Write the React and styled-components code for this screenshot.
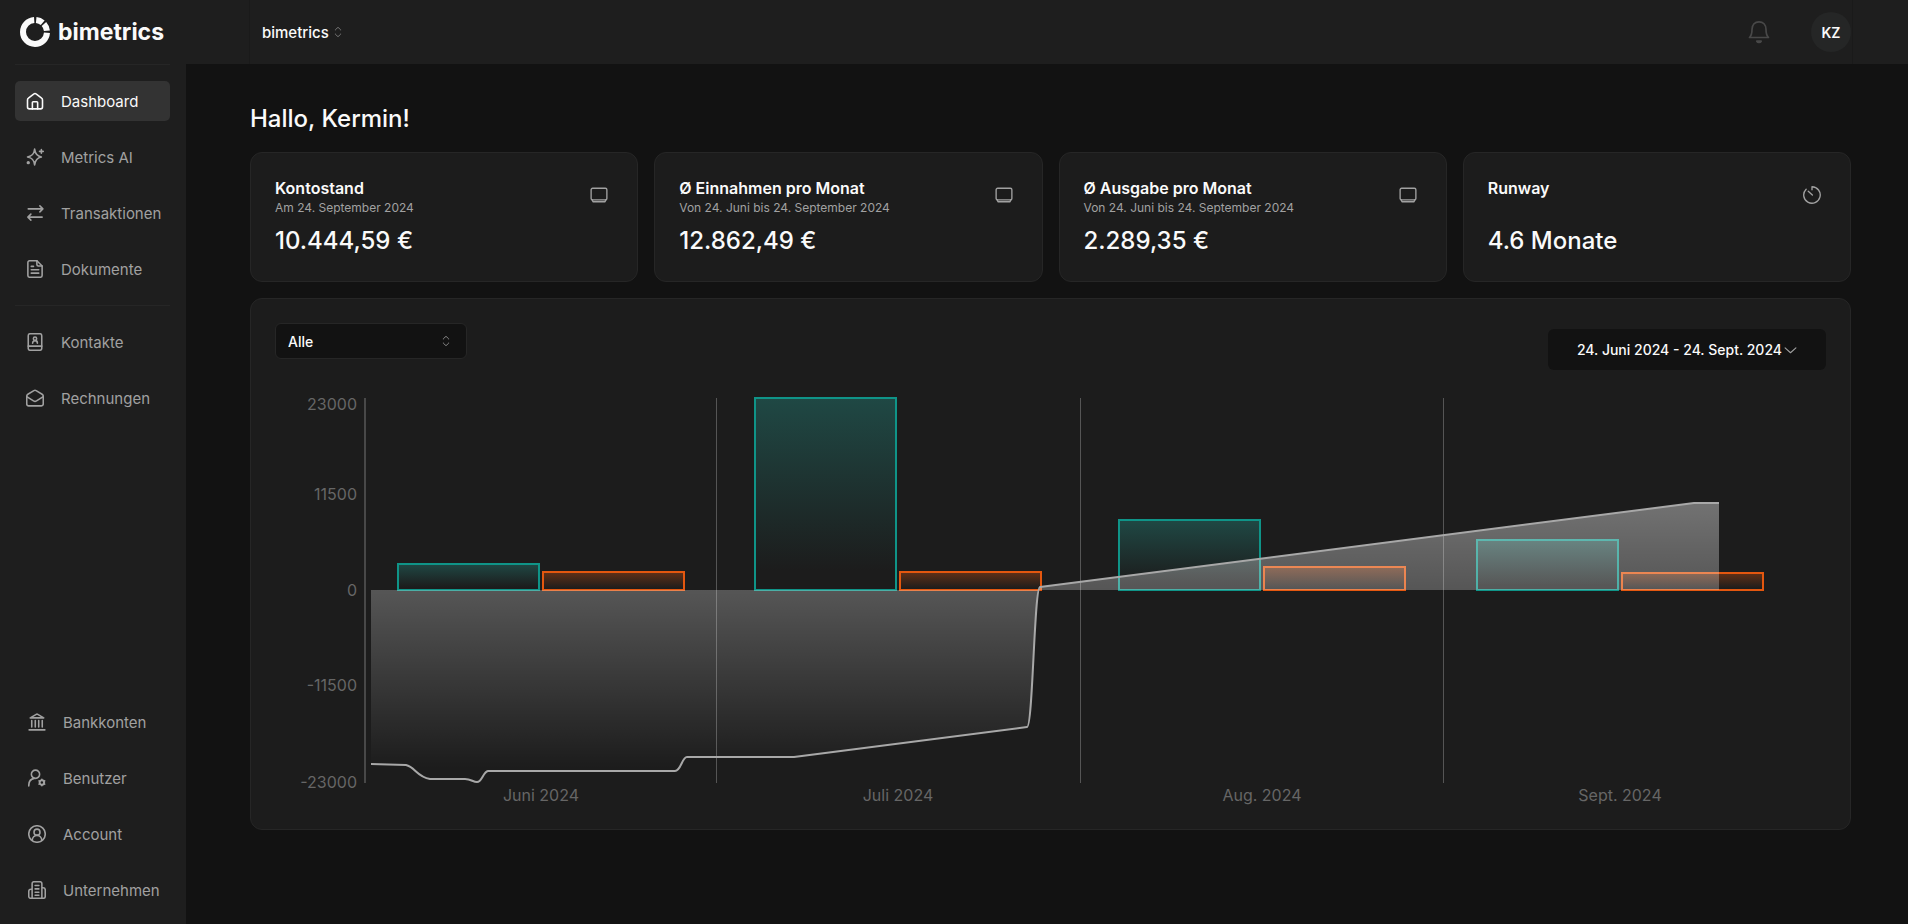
import React, { useState } from "react";
import styled, { createGlobalStyle } from "styled-components";

const GlobalStyle = createGlobalStyle`
  * {
    box-sizing: border-box;
  }

  body {
    margin: 0;
    background: #121212;
    color: #fafafa;
    font-family: Inter, "Open Sans", sans-serif;
    font-size: 14px;
  }

  button,
  select {
    font: inherit;
    color: inherit;
  }
`;

const Layout = styled.div`
  display: flex;
  min-height: 100vh;
`;

const Sidebar = styled.aside`
  position: sticky;
  top: 0;
  display: flex;
  flex-direction: column;
  flex: none;
  width: 186px;
  height: 100vh;
  padding: 0 16px 14px 15px;
  background: #1e1e1e;
`;

const Brand = styled.a`
  display: flex;
  align-items: center;
  gap: 8px;
  height: 64px;
  padding-left: 5px;
  color: #fafafa;
  font-size: 23px;
  font-weight: 700;
  text-decoration: none;
`;

const Nav = styled.nav`
  display: flex;
  flex-direction: column;
  gap: 16px;
  padding: 16px 0;
  border-top: 1px solid #262626;
`;

const BottomNav = styled(Nav)`
  margin-top: auto;
  padding: 0 0 0 2px;
  border-top: none;
`;

const NavLink = styled.a`
  display: flex;
  align-items: center;
  gap: 17px;
  height: 40px;
  padding-left: 11px;
  border-radius: 5px;
  background: ${({ $active }) => ($active ? "#333333" : "transparent")};
  color: ${({ $active }) => ($active ? "#fafafa" : "#a1a1a1")};
  font-size: 15px;
  text-decoration: none;
`;

const Main = styled.div`
  flex: 1;
  min-width: 0;
`;

const Header = styled.header`
  height: 64px;
  padding: 0 55px 0 63px;
  background: #1e1e1e;
`;

const HeaderInner = styled.div`
  display: flex;
  align-items: center;
  justify-content: space-between;
  height: 100%;
  padding: 0 1px 0 12px;
  border: solid #1a1a1a;
  border-width: 0 1px;
`;

const HeaderActions = styled.div`
  display: flex;
  align-items: center;
  gap: 41px;
`;

const PlainButton = styled.button`
  display: flex;
  align-items: center;
  gap: 2px;
  padding: 0;
  border: none;
  background: none;
  font-size: 15px;
  font-weight: 500;
  cursor: pointer;

  svg {
    color: #737373;
  }
`;

const BellButton = styled(PlainButton)`
  svg {
    color: #484848;
  }
`;

const Avatar = styled.button`
  width: 40px;
  height: 40px;
  padding: 0;
  border: none;
  border-radius: 50%;
  background: #252626;
  font-weight: 600;
  cursor: pointer;
`;

const Content = styled.main`
  padding: 37px 57px 64px 64px;
`;

const Greeting = styled.h1`
  margin: 0 0 15px;
  font-size: 24px;
  font-weight: 500;
  line-height: 36px;
`;

const Cards = styled.section`
  display: grid;
  grid-template-columns: repeat(4, 1fr);
  gap: 16px;
  margin-bottom: 16px;

  @media screen and (max-width: 1100px) {
    grid-template-columns: repeat(2, 1fr);
  }
`;

const Panel = styled.div`
  padding: 24px;
  border: 1px solid #262626;
  border-radius: 12px;
  background: #1c1c1c;
`;

const StatCard = styled(Panel)`
  display: flex;
  justify-content: space-between;
  padding-bottom: 22px;
`;

const StatTitle = styled.h2`
  margin: 0;
  font-size: 16px;
  font-weight: 600;
  line-height: 22px;
`;

const StatPeriod = styled.p`
  min-height: 18px;
  margin: 0 0 6px;
  color: #a1a1a1;
  font-size: 12px;
  line-height: 18px;
`;

const StatValue = styled.p`
  margin: 0;
  font-size: 24px;
  font-weight: 500;
  line-height: 36px;
`;

const StatIcon = styled.span`
  display: flex;
  align-items: center;
  justify-content: center;
  width: 28px;
  height: 28px;
  margin-top: 4px;
  color: #a1a1a1;
`;

const Toolbar = styled.div`
  display: flex;
  align-items: flex-start;
  justify-content: space-between;
  margin-bottom: 12px;
`;

const SelectWrapper = styled.div`
  position: relative;
  width: 192px;

  svg {
    position: absolute;
    top: 11px;
    right: 14px;
    color: #858585;
    pointer-events: none;
  }
`;

const Select = styled.select`
  display: block;
  width: 100%;
  height: 36px;
  padding: 0 12px;
  border: 1px solid #262626;
  border-radius: 6px;
  background: #121212;
  font-weight: 500;
  appearance: none;
`;

const DateButton = styled.button`
  display: flex;
  align-items: center;
  justify-content: center;
  gap: 2px;
  height: 41px;
  margin-top: 6px;
  padding: 0 29px;
  border: none;
  border-radius: 6px;
  background: #121212;
  font-weight: 500;
  cursor: pointer;
`;

const Chart = styled.svg`
  display: block;
  width: 100%;
  height: auto;

  text {
    fill: #666666;
    font-size: 16px;
  }
`;

const Icon = ({ size = 18, width = 2.1, children }) => (
  <svg
    width={size}
    height={size}
    viewBox="0 0 24 24"
    fill="none"
    stroke="currentColor"
    strokeWidth={width}
    strokeLinecap="round"
    strokeLinejoin="round"
    aria-hidden="true"
  >
    {children}
  </svg>
);

const Logo = () => (
  <svg width="30" height="30" viewBox="0 0 30 30" fill="none" aria-hidden="true">
    <circle
      cx="15"
      cy="15"
      r="12"
      stroke="currentColor"
      strokeWidth="6"
      pathLength="360"
      strokeDasharray="262 10 34 8 36 10"
      strokeDashoffset="-4"
    />
  </svg>
);

const HomeIcon = () => (
  <Icon>
    <path d="M2 10.600a3 3 0 0 1 1.200-2.400l7-5.500a3 3 0 0 1 3.600 0l7 5.500a3 3 0 0 1 1.200 2.400V20a2.500 2.500 0 0 1-2.500 2.500h-15A2.500 2.500 0 0 1 2 20z" />
    <path d="M8.500 22.500V14a1 1 0 0 1 1-1h5a1 1 0 0 1 1 1v8.500" />
  </Icon>
);

const SparklesIcon = () => (
  <Icon>
    <path d="M11.500 1.500c.8 6.500 3 9.300 9 10.500-6 1.200-8.200 4-9 10.500-.8-6.500-3-9.300-9.500-10.500 6.500-1.200 8.700-4 9.500-10.500z" />
    <path d="M20.500 2v5M18 4.500h5" />
    <circle cx="3" cy="19.500" r="1.200" fill="currentColor" />
  </Icon>
);

const TransferIcon = () => (
  <Icon>
    <path d="M3 6.500h19M18.500 2.500l4 4-4 4M21.500 17.500H2.500M6.500 13.500l-4 4 4 4" />
  </Icon>
);

const DocumentIcon = () => (
  <Icon>
    <path d="M14.500 1H5a2.500 2.500 0 0 0-2.500 2.500v17A2.500 2.500 0 0 0 5 23h14a2.500 2.500 0 0 0 2.500-2.500V8z" />
    <path d="M14.500 1v5a2 2 0 0 0 2 2h5M7 8.500h3M7 13h10M7 17.500h10" />
  </Icon>
);

const ContactsIcon = () => (
  <Icon>
    <rect x="3" y="1" width="18" height="22" rx="2.500" />
    <path d="M3 17.500h18M8.800 13.500c0-4.500 6.400-4.500 6.400 0" />
    <circle cx="12" cy="7.500" r="2.200" />
  </Icon>
);

const InvoiceIcon = () => (
  <Icon>
    <path d="M1 9.600a3 3 0 0 1 1.500-2.600l8-4.800a3 3 0 0 1 3 0l8 4.800A3 3 0 0 1 23 9.600V20a2.500 2.500 0 0 1-2.500 2.500h-17A2.500 2.500 0 0 1 1 20z" />
    <path d="M1.500 10.500l8.500 5.400a4 4 0 0 0 4 0l8.500-5.400" />
  </Icon>
);

const BankIcon = () => (
  <Icon>
    <path d="M3 6.500l8-4.700a2 2 0 0 1 2 0l8 4.700zM5 10v8.500M9.700 10v8.500M14.300 10v8.500M19 10v8.500M1.500 22.500h21" />
  </Icon>
);

const UserCogIcon = () => (
  <Icon>
    <circle cx="10" cy="7" r="5.500" />
    <path d="M1 22.500c0-5.500 3-9.500 7.500-10" />
    <circle cx="18.500" cy="18" r="3" strokeWidth="2.600" />
    <path d="M18.500 13.600v1M18.500 21.400v1M14.700 15.800l.9.500M21.400 19.700l.9.500M14.700 20.200l.9-.5M21.400 16.300l.9-.5" />
  </Icon>
);

const AccountIcon = () => (
  <Icon>
    <circle cx="12" cy="12" r="11" />
    <circle cx="12" cy="9.500" r="4" />
    <path d="M5.500 20.500c.5-4 3-6.500 6.500-6.500s6 2.500 6.500 6.500" />
  </Icon>
);

const CompanyIcon = () => (
  <Icon>
    <path d="M5.500 23V3.500A2.500 2.500 0 0 1 8 1h8a2.500 2.500 0 0 1 2.500 2.500V23M5.500 11H4a3 3 0 0 0-3 3v6.500A2.500 2.500 0 0 0 3.500 23h17a2.500 2.500 0 0 0 2.500-2.500V12a3 3 0 0 0-3-3h-1.500" />
    <path d="M9.500 6h5M9.500 10.500h5M9.500 15h5M9.500 19h5" />
  </Icon>
);

const BellIcon = () => (
  <svg
    width="22"
    height="24"
    viewBox="0 0 22 24"
    fill="none"
    stroke="currentColor"
    strokeWidth="1.700"
    strokeLinecap="round"
    strokeLinejoin="round"
    aria-hidden="true"
  >
    <path d="M1.500 17.500c2-2 2.500-4 2.500-8C4 4.500 7 1.800 11 1.800s7 2.700 7 7.700c0 4 .5 6 2.500 8z" />
    <path d="M8.800 21.200c.9 1.500 3.500 1.500 4.400 0z" />
  </svg>
);

const SelectorIcon = () => (
  <Icon size={14} width={1.700}>
    <path d="M7.500 8.500V8L12 4l4.500 4v.5M7.500 15.500v.5l4.500 4 4.500-4v-.5" />
  </Icon>
);

const ChevronIcon = () => (
  <Icon size={13} width={2}>
    <path d="M2 9l10 9 10-9" stroke="#a1a1a1" />
  </Icon>
);

const CardIcon = () => (
  <Icon width={1.800}>
    <rect x="1.500" y="3" width="21" height="15.500" rx="2" />
    <path d="M3 18.500l1 2.500h16l1-2.500" />
  </Icon>
);

const RunwayIcon = () => (
  <Icon width={1.800}>
    <path d="M12 5V1a11 11 0 1 1-7.800 3.200M7 7l5.500 5" />
  </Icon>
);

const mainLinks = [
  { label: "Dashboard", icon: <HomeIcon />, active: true },
  { label: "Metrics AI", icon: <SparklesIcon /> },
  { label: "Transaktionen", icon: <TransferIcon /> },
  { label: "Dokumente", icon: <DocumentIcon /> },
];

const officeLinks = [
  { label: "Kontakte", icon: <ContactsIcon /> },
  { label: "Rechnungen", icon: <InvoiceIcon /> },
];

const settingsLinks = [
  { label: "Bankkonten", icon: <BankIcon /> },
  { label: "Benutzer", icon: <UserCogIcon /> },
  { label: "Account", icon: <AccountIcon /> },
  { label: "Unternehmen", icon: <CompanyIcon /> },
];

const stats = [
  {
    title: "Kontostand",
    period: "Am 24. September 2024",
    value: "10.444,59 €",
    icon: <CardIcon />,
  },
  {
    title: "Ø Einnahmen pro Monat",
    period: "Von 24. Juni bis 24. September 2024",
    value: "12.862,49 €",
    icon: <CardIcon />,
  },
  {
    title: "Ø Ausgabe pro Monat",
    period: "Von 24. Juni bis 24. September 2024",
    value: "2.289,35 €",
    icon: <CardIcon />,
  },
  { title: "Runway", value: "4.6 Monate", icon: <RunwayIcon /> },
];

// x is the left edge of the income bar, the expense bar follows it
const months = [
  { label: "Juni 2024", x: 123, income: 3100, expense: 2100 },
  { label: "Juli 2024", x: 480, income: 22950, expense: 2200 },
  { label: "Aug. 2024", x: 844, income: 8400, expense: 2800 },
  { label: "Sept. 2024", x: 1202, income: 5950, expense: 2000 },
];

const ticks = [
  { value: 23000, y: 22 },
  { value: 11500, y: 112 },
  { value: 0, y: 208 },
  { value: -11500, y: 303 },
  { value: -23000, y: 400 },
];

const gridLines = [441, 805, 1168];

const ZERO = 208;
const BAR_WIDTH = 141;
const BAR_STEP = 145;
const toHeight = (value) => Math.round((value * 192) / 23000);

const balancePath =
  "M96 382L131 383C140 385 142 395 155 397H190C196 397 198 400 202 400C207 400 208 390 213 389H400C406 389 407 375 412 375H519L752 345C758 345 759 206 765 205L1419 121H1444";

const BalanceChart = () => (
  <Chart viewBox="0 0 1551 423" role="img" aria-label="Kontostand, Einnahmen und Ausgaben">
    <defs>
      <linearGradient id="income" x1="0" y1="0" x2="0" y2="1">
        <stop offset="0" stopColor="#26a69a" stopOpacity="0.32" />
        <stop offset="0.9" stopColor="#26a69a" stopOpacity="0" />
      </linearGradient>
      <linearGradient id="expense" x1="0" y1="0" x2="0" y2="1">
        <stop offset="0" stopColor="#ea580c" stopOpacity="0.34" />
        <stop offset="0.95" stopColor="#ea580c" stopOpacity="0" />
      </linearGradient>
      <linearGradient id="balance" x1="0" y1="0" x2="0" y2="1">
        <stop offset="0" stopColor="#ffffff" stopOpacity="0.38" />
        <stop offset="0.95" stopColor="#ffffff" stopOpacity="0" />
      </linearGradient>
    </defs>
    <path d="M90 16V401" stroke="#484848" strokeWidth="2" />
    {gridLines.map((x) => (
      <path key={x} d={`M${x + 0.5} 16V401`} stroke="#555555" />
    ))}
    {ticks.map(({ value, y }) => (
      <text key={value} x="82" y={y} dy="6" textAnchor="end">
        {value}
      </text>
    ))}
    {months.map(({ label, x, income, expense }) => (
      <g key={label}>
        <rect
          x={x}
          y={ZERO - toHeight(income)}
          width={BAR_WIDTH}
          height={toHeight(income)}
          fill="url(#income)"
          stroke="#0f9488"
          strokeWidth="2"
        />
        <rect
          x={x + BAR_STEP}
          y={ZERO - toHeight(expense)}
          width={BAR_WIDTH}
          height={toHeight(expense)}
          fill="url(#expense)"
          stroke="#e4570f"
          strokeWidth="2"
        />
        <text x={x + BAR_STEP - 2} y="419" textAnchor="middle">
          {label}
        </text>
      </g>
    ))}
    <path d={`${balancePath}V${ZERO}H96Z`} fill="url(#balance)" />
    <path d={balancePath} fill="none" stroke="#a8a8a8" strokeWidth="2" strokeLinejoin="round" />
  </Chart>
);

const NavItems = ({ links }) =>
  links.map(({ label, icon, active }) => (
    <NavLink key={label} href="#" $active={active} aria-current={active ? "page" : undefined}>
      {icon}
      {label}
    </NavLink>
  ));

const App = () => {
  const [account, setAccount] = useState("Alle");

  return (
    <Layout>
      <GlobalStyle />
      <Sidebar>
        <Brand href="#">
          <Logo />
          bimetrics
        </Brand>
        <Nav>
          <NavItems links={mainLinks} />
        </Nav>
        <Nav>
          <NavItems links={officeLinks} />
        </Nav>
        <BottomNav>
          <NavItems links={settingsLinks} />
        </BottomNav>
      </Sidebar>
      <Main>
        <Header>
          <HeaderInner>
            <PlainButton type="button">
              bimetrics
              <SelectorIcon />
            </PlainButton>
            <HeaderActions>
              <BellButton type="button" aria-label="Benachrichtigungen">
                <BellIcon />
              </BellButton>
              <Avatar type="button">KZ</Avatar>
            </HeaderActions>
          </HeaderInner>
        </Header>
        <Content>
          <Greeting>Hallo, Kermin!</Greeting>
          <Cards>
            {stats.map(({ title, period, value, icon }) => (
              <StatCard key={title}>
                <div>
                  <StatTitle>{title}</StatTitle>
                  <StatPeriod>{period}</StatPeriod>
                  <StatValue>{value}</StatValue>
                </div>
                <StatIcon>{icon}</StatIcon>
              </StatCard>
            ))}
          </Cards>
          <Panel>
            <Toolbar>
              <SelectWrapper>
                <Select
                  aria-label="Konto"
                  value={account}
                  onChange={(e) => setAccount(e.target.value)}
                >
                  <option>Alle</option>
                </Select>
                <SelectorIcon />
              </SelectWrapper>
              <DateButton type="button">
                24. Juni 2024 - 24. Sept. 2024
                <ChevronIcon />
              </DateButton>
            </Toolbar>
            <BalanceChart />
          </Panel>
        </Content>
      </Main>
    </Layout>
  );
};

export default App;
